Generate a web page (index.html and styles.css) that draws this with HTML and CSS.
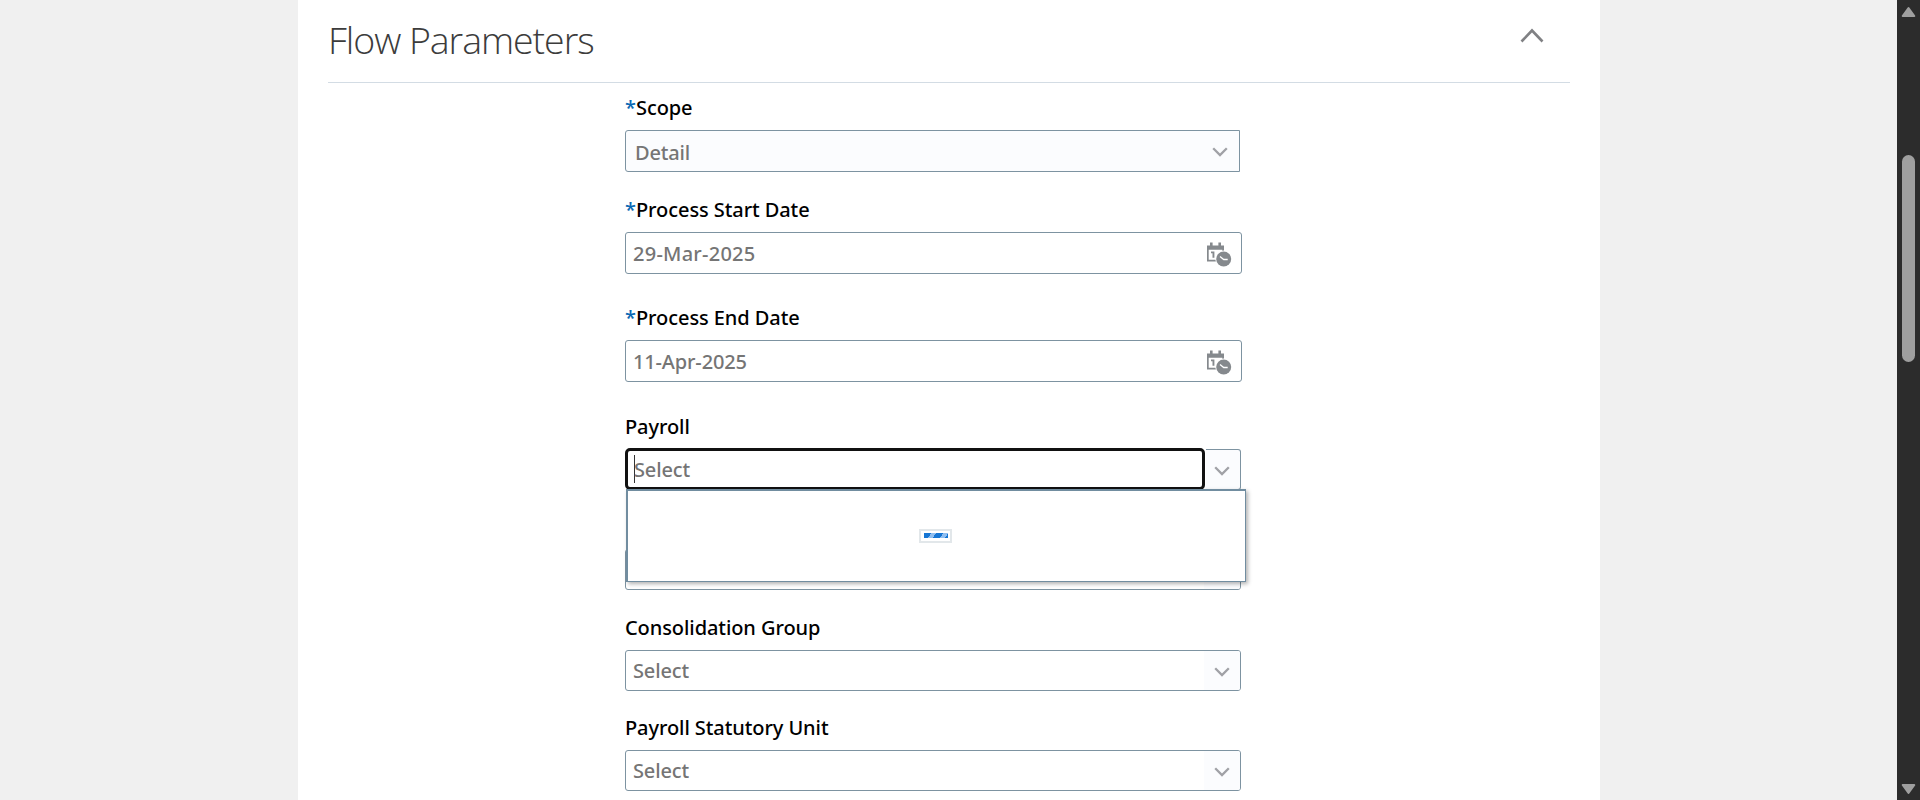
FILE: index.html
```html
<!DOCTYPE html>
<html lang="en">
<head>
<meta charset="utf-8">
<title>Flow Parameters</title>
<link rel="stylesheet" href="styles.css">
</head>
<body>
<div class="page">
  <main class="panel">
    <header class="panel-header">
      <h1 class="title">Flow Parameters</h1>
      <svg class="collapse" width="26" height="16" viewBox="0 0 26 16"><path d="M2.5 13.5 13 2.5 23.5 13.5" fill="none" stroke="#808184" stroke-width="2.6"/></svg>
    </header>
    <form class="fields">
      <div class="field scope">
        <label class="label"><span class="star">*</span><span>Scope</span></label>
        <div class="control choice"><span class="value">Detail</span><svg class="chevron" width="16" height="10" viewBox="0 0 16 10"><path d="M1.2 1.2 8 8 14.8 1.2"/></svg></div>
      </div>
      <div class="field start">
        <label class="label"><span class="star">*</span><span>Process Start Date</span></label>
        <div class="control date"><span class="value start-value">29-Mar-2025</span>
          <svg class="calendar" width="25" height="25" viewBox="0 0 25 25"><path d="M0 3.5h17V11h-1.7V7.8H1.7v10H9v1.7H0zM3 .5h2.6v4H3zM11.4.5H14v4h-2.6z"/><path d="M4 9.6h3.4v6.2H5.5v-4.6H4z"/><circle cx="16.7" cy="17" r="8.4" fill="#fff"/><circle cx="16.7" cy="17" r="7.5"/><path d="M13 14.5l3.7 3h4" fill="none" stroke="#fff" stroke-width="1.3"/></svg></div>
      </div>
      <div class="field end">
        <label class="label"><span class="star">*</span><span>Process End Date</span></label>
        <div class="control date"><span class="value">11-Apr-2025</span>
          <svg class="calendar" width="25" height="25" viewBox="0 0 25 25"><path d="M0 3.5h17V11h-1.7V7.8H1.7v10H9v1.7H0zM3 .5h2.6v4H3zM11.4.5H14v4h-2.6z"/><path d="M4 9.6h3.4v6.2H5.5v-4.6H4z"/><circle cx="16.7" cy="17" r="8.4" fill="#fff"/><circle cx="16.7" cy="17" r="7.5"/><path d="M13 14.5l3.7 3h4" fill="none" stroke="#fff" stroke-width="1.3"/></svg></div>
      </div>
      <div class="field payroll">
        <label class="label"><span>Payroll</span></label>
        <div class="control combo active">
          <div class="input"><span class="caret"></span><span class="value">Select</span></div>
          <div class="drop"><svg class="chevron" width="16" height="10" viewBox="0 0 16 10"><path d="M1.2 1.2 8 8 14.8 1.2"/></svg></div>
        </div>
        <div class="popup"><div class="loader"><div class="stripes"></div></div></div>
      </div>
      <div class="field covered"><div class="control combo"><div class="input"></div><div class="drop"></div></div></div>
      <div class="field group">
        <label class="label"><span>Consolidation Group</span></label>
        <div class="control combo"><div class="input"><span class="value">Select</span></div><div class="drop"><svg class="chevron" width="16" height="10" viewBox="0 0 16 10"><path d="M1.2 1.2 8 8 14.8 1.2"/></svg></div></div>
      </div>
      <div class="field unit">
        <label class="label"><span>Payroll Statutory Unit</span></label>
        <div class="control combo"><div class="input"><span class="value">Select</span></div><div class="drop"><svg class="chevron" width="16" height="10" viewBox="0 0 16 10"><path d="M1.2 1.2 8 8 14.8 1.2"/></svg></div></div>
      </div>
    </form>
  </main>
  <aside class="scrollbar">
    <svg width="15" height="12" viewBox="0 0 15 12"><path d="M7.5 2 13.3 10H1.7z"/></svg>
    <div class="thumb"></div>
    <svg class="down" width="15" height="12" viewBox="0 0 15 12"><path d="M7.5 10 13.3 2H1.7z"/></svg>
  </aside>
</div>
</body>
</html>
```
FILE: styles.css
```css
* { box-sizing: border-box; }
body { margin: 0; overflow: hidden; background: #f0f0f0; font-family: "Noto Sans", "Open Sans", sans-serif; font-size: 20px; }
.page { display: flex; height: 800px; padding-left: 298px; justify-content: space-between; }
.panel { width: 1302px; height: 800px; padding: 0 30px; background: #fff; }
.panel-header { display: flex; justify-content: space-between; height: 83px; border-bottom: 1px solid #d3dce4; }
.title { margin: 14px 0 0; font-family: "Open Sans", sans-serif; font-size: 37.5px; font-weight: 300; line-height: 52px; color: #3c3c3c; letter-spacing: -1.05px; white-space: nowrap; }
.collapse { margin: 28px 25px 0 0; }
.fields { display: flex; flex-direction: column; width: 617px; margin-left: 297px; padding-top: 12px; }
.field { position: relative; display: flex; flex-direction: column; }
.label { display: flex; height: 24px; line-height: 24px; margin-bottom: 10px; font-weight: 500; color: #000; white-space: nowrap; letter-spacing: -0.08px; }
.star { width: 11px; color: #0968b3; }
.control { display: flex; align-items: center; justify-content: space-between; border: 1px solid #7d93a1; border-radius: 3px; background: #fff; color: #757575; }
.value { line-height: 28px; padding-top: 1px; font-weight: 500; white-space: nowrap; letter-spacing: -0.15px; }
.start-value { letter-spacing: 0.25px; }
.chevron path { fill: none; stroke: #a0a1a6; stroke-width: 2.3; }
.scope .label { line-height: 26px; margin-bottom: 11px; }
.choice { width: 615px; height: 42px; padding: 2px 11px 0 9px; background: #fbfcfe; border-radius: 3px 0 0 3px; }
.start { margin-top: 26px; }
.date { height: 42px; padding: 0 9px 0 7px; }
.calendar { fill: #85898d; margin-top: 3px; }
.end { margin-top: 32px; }
.payroll { margin-top: 33px; }
.payroll .label { margin-bottom: 9px; }
.combo { width: 616px; height: 41px; align-items: stretch; overflow: hidden; }
.input { display: flex; align-items: center; flex: 1; padding-left: 7px; }
.drop { display: flex; align-items: center; justify-content: center; width: 36px; padding-top: 3px; background: #fbfcfe; }
.active { border: 0; border-radius: 0; background: none; height: 42px; }
.active .input { flex: none; width: 580px; height: 42px; border: 3px solid #111; border-radius: 5px; padding-left: 6px; }
.active .drop { width: 35px; height: 41px; margin-top: 1px; padding-right: 2px; border: 1px solid #7d93a1; border-left: 0; border-radius: 0 3px 3px 0; }
.caret { width: 1px; height: 28px; margin-right: -1px; background: #333; }
.popup { position: absolute; z-index: 2; left: 1px; top: 74px; width: 620px; height: 93px; padding-right: 2px; display: flex; align-items: center; justify-content: center; border: 1px solid #718da0; border-top-width: 2px; border-left-width: 2px; background: #fff; box-shadow: 2px 2px 4px rgba(0,0,0,.3); }
.loader { width: 33px; height: 14px; padding: 2px; border: 2px solid #e2e7ea; }
.stripes { height: 5px; margin: 0 0 0 1px; background: repeating-linear-gradient(125deg, #1676d4 0 6px, #8fbef0 6px 10px); }
.covered { margin-top: 59px; }
.group { margin-top: 26px; }
.unit { margin-top: 25px; }
.scrollbar { display: flex; flex-direction: column; align-items: center; width: 23px; height: 800px; padding-top: 6px; background: #2c2c2c; }
.scrollbar path { fill: #9f9f9f; stroke: #9f9f9f; stroke-width: 2; stroke-linejoin: round; }
.thumb { width: 13px; height: 207px; margin-top: 137px; border-radius: 7px; background: #9f9f9f; }
.down { margin-top: auto; margin-bottom: 5px; }
```
